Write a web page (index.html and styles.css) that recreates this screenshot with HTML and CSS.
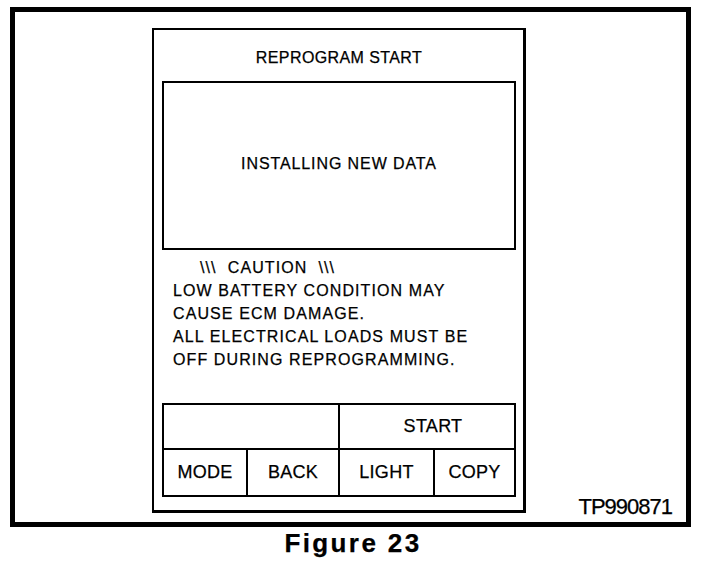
FILE: index.html
```html
<!DOCTYPE html>
<html lang="en">
<head>
    <meta charset="UTF-8">
    <meta name="viewport" content="width=device-width, initial-scale=1.0">
    <title>Figure 23</title>
    <link rel="stylesheet" href="styles.css">
</head>
<body>
    <div class="frame">
        <div class="panel">
            <h2 class="title">REPROGRAM START</h2>
            <div class="display">INSTALLING NEW DATA</div>
            <p class="caution-head">\\\&nbsp; CAUTION&nbsp; \\\</p>
            <p class="caution">
                LOW BATTERY CONDITION MAY<br>
                CAUSE ECM DAMAGE.<br>
                ALL ELECTRICAL LOADS MUST BE<br>
                OFF DURING REPROGRAMMING.
            </p>
            <div class="keys">
                <div class="key key-blank"></div>
                <div class="key key-start">START</div>
                <div class="key key-first">MODE</div>
                <div class="key">BACK</div>
                <div class="key">LIGHT</div>
                <div class="key">COPY</div>
            </div>
        </div>
        <div class="code">TP990871</div>
    </div>
    <p class="caption">Figure 23</p>
</body>
</html>
```

FILE: styles.css
```css
body {
    margin: 0;
    background-color: white;
    color: black;
    font-family: "Liberation Sans", Arial, sans-serif;
    -webkit-text-stroke: 0.25px black;
}
.frame {
    display: flex;
    margin: 7px 0 0 10px;
    width: 671px;
    height: 510px;
    border: 5px solid black;
}
.panel {
    display: flex;
    flex-direction: column;
    box-sizing: border-box;
    margin: 16px 0 0 137px;
    width: 374px;
    height: 485px;
    padding: 18px 7px 13px 8px;
    border-style: solid;
    border-color: black;
    border-width: 2px 3px 3px 2px;
}
.title {
    margin: 0;
    font-size: 16px;
    font-weight: normal;
    line-height: 20px;
    letter-spacing: 0.4px;
    text-align: center;
}
.display {
    display: flex;
    justify-content: center;
    align-items: center;
    box-sizing: border-box;
    height: 169px;
    margin-top: 13px;
    padding-bottom: 3px;
    border: 2px solid black;
    font-size: 16px;
    letter-spacing: 0.9px;
}
.caution-head, .caution {
    margin: 0;
    font-size: 16px;
    line-height: 23px;
    letter-spacing: 1.1px;
}
.caution-head {
    margin-top: 6px;
    padding-left: 38px;
}
.caution {
    padding-left: 11px;
}
.keys {
    display: grid;
    grid-template-columns: 82px 92px 95px 1fr;
    grid-template-rows: 43px 47px;
    margin-top: auto;
    border: 2px solid black;
    font-size: 18px;
    letter-spacing: 0.3px;
}
.key {
    display: flex;
    justify-content: center;
    align-items: center;
    border-left: 2px solid black;
    border-top: 2px solid black;
}
.key-blank {
    grid-column: 1 / 3;
    border: none;
}
.key-start {
    grid-column: 3 / 5;
    border-top: none;
    padding-left: 12px;
}
.key-first {
    border-left: none;
}
.code {
    align-self: flex-end;
    margin: 0 14px 4px auto;
    font-size: 22px;
    line-height: 22px;
    letter-spacing: -1px;
}
.caption {
    margin: 1px 0 0 0;
    width: 704px;
    padding-left: 2px;
    box-sizing: border-box;
    text-align: center;
    font-size: 26px;
    font-weight: bold;
    line-height: 30px;
    letter-spacing: 2.4px;
}
```
